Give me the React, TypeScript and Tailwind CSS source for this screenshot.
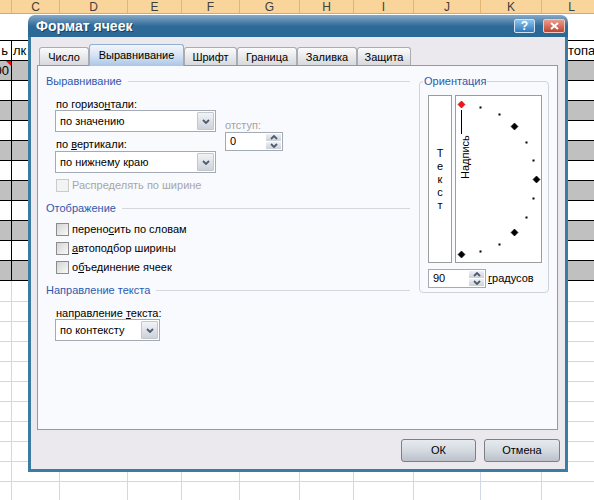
import React from "react";

const COLS = [12, 48, 68, 54, 58, 60, 54, 60, 67, 61, 60];
const LETTERS = ["", "C", "D", "E", "F", "G", "H", "I", "J", "K", "L"];

function Sheet() {
  const bordered = Array.from({ length: 12 }, (_, i) => i);
  const light = Array.from({ length: 11 }, (_, i) => i);
  return (
    <div className="flex flex-col">
      {/* column header */}
      <div className="flex h-[14px] bg-[#f9d59c] border-b border-[#d9a862]">
        {COLS.map((w, i) => (
          <div
            key={i}
            style={{ width: w }}
            className="shrink-0 border-r border-[#e2b576] text-center text-[12px] leading-[14px] text-[#3f3f3f]"
          >
            {LETTERS[i]}
          </div>
        ))}
      </div>
      <div className="h-[27px] bg-white border-b border-black" />
      {bordered.map((r) => (
        <div key={r} className={`flex h-[20px] border-b border-black ${r % 2 === 1 ? "bg-[#c0c0c0]" : "bg-white"}`}>
          {COLS.map((w, i) => (
            <div
              key={i}
              style={{ width: w }}
              className="relative shrink-0 overflow-hidden whitespace-nowrap border-r border-black text-[13px] leading-[19px] text-black"
            >
              {r === 0 && i === 0 && <span className="absolute right-[3px]">ь</span>}
              {r === 0 && i === 1 && <span className="pl-[1px]">лк</span>}
              {r === 0 && i === 10 && <span className="absolute left-[26px]">топа</span>}
              {r === 1 && i === 0 && (
                <>
                  <span className="absolute right-[2px]">00</span>
                  <span className="absolute right-0 top-0 h-0 w-0 border-l-[5px] border-t-[5px] border-l-transparent border-t-[#ff0000]" />
                </>
              )}
            </div>
          ))}
        </div>
      ))}
      {light.map((r) => (
        <div key={r} className={`flex ${r === 0 ? "h-[21px]" : "h-[20px]"} border-b border-[#d0d7e5] bg-white`}>
          {COLS.map((w, i) => (
            <div key={i} style={{ width: w }} className="shrink-0 border-r border-[#d0d7e5]" />
          ))}
        </div>
      ))}
    </div>
  );
}

function Chevron({ up }: { up?: boolean }) {
  return (
    <svg width="8" height="5" viewBox="0 0 8 5">
      <path
        d={up ? "M1 4 L4 1 L7 4" : "M1 1 L4 4 L7 1"}
        fill="none"
        stroke="#4e5b72"
        strokeWidth="1.8"
      />
    </svg>
  );
}

function Select({ width, value, className = "" }: { width: number; value: string; className?: string }) {
  return (
    <div
      style={{ width }}
      className={`flex h-[22px] items-center border border-[#a4aab3] bg-white ${className}`}
    >
      <span className="flex-1 pl-[4px] whitespace-nowrap">{value}</span>
      <div className="mr-[1px] flex h-[18px] w-[17px] items-center justify-center rounded-[1px] border border-[#c3c7ce] bg-gradient-to-b from-[#f1f3f6] to-[#cdd2da]">
        <Chevron />
      </div>
    </div>
  );
}

function Spin({ width, value, className = "" }: { width: number; value: string; className?: string }) {
  return (
    <div style={{ width }} className={`flex h-[19px] items-stretch border border-[#a4aab3] bg-white ${className}`}>
      <span className="flex-1 pl-[4px] leading-[17px]">{value}</span>
      <div className="m-[1px] flex w-[15px] flex-col gap-[1px]">
        <div className="flex flex-1 items-center justify-center bg-gradient-to-b from-[#eef0f3] to-[#ccd1d8]">
          <Chevron up />
        </div>
        <div className="flex flex-1 items-center justify-center bg-gradient-to-b from-[#eef0f3] to-[#ccd1d8]">
          <Chevron />
        </div>
      </div>
    </div>
  );
}

function Check({ children, disabled, className = "" }: { children: React.ReactNode; disabled?: boolean; className?: string }) {
  return (
    <div className={`flex h-[14px] items-center pl-[10px] ${className}`}>
      <span
        className={`h-[13px] w-[13px] shrink-0 border ${
          disabled
            ? "border-[#cbcbcb] bg-[#f3f3f3]"
            : "border-[#8c8c8c] bg-gradient-to-br from-[#d3d3d3] to-[#fafafa]"
        }`}
      />
      <span className={`ml-[3px] whitespace-nowrap ${disabled ? "text-[#a6a6a6]" : "text-black"}`}>{children}</span>
    </div>
  );
}

function GroupHead({ children, className = "" }: { children: React.ReactNode; className?: string }) {
  return (
    <div className={`flex h-[14px] items-center ${className}`}>
      <span className="whitespace-nowrap text-[#2d59ae]">{children}</span>
      <div className="ml-[6px] h-px flex-1 bg-[#d5d8df]" />
    </div>
  );
}

function Label({ children, className = "" }: { children: React.ReactNode; className?: string }) {
  return <div className={`h-[14px] whitespace-nowrap pl-[1px] ${className}`}>{children}</div>;
}

function Dial() {
  const pts = Array.from({ length: 13 }, (_, i) => {
    const a = ((90 - i * 15) * Math.PI) / 180;
    return { x: Math.round(5 + 75 * Math.cos(a)), y: Math.round(83 - 75 * Math.sin(a)), i };
  });
  return (
    <svg width="85" height="166" viewBox="0 0 85 166">
      <line x1="5.5" y1="14" x2="5.5" y2="38" stroke="#000" strokeWidth="1" />
      <text
        transform="translate(12.5,83) rotate(-90)"
        fontFamily="Liberation Sans, Arial, sans-serif"
        fontSize="11"
        fill="#000"
      >
        Надпись
      </text>
      {pts.map((p) =>
        p.i % 3 === 0 ? (
          <polygon
            key={p.i}
            points={`${p.x + 0.5},${p.y - 3} ${p.x + 4},${p.y + 0.5} ${p.x + 0.5},${p.y + 4} ${p.x - 3},${p.y + 0.5}`}
            fill={p.i === 0 ? "#ff1010" : "#000"}
            stroke={p.i === 0 ? "#9a0000" : "#000"}
            strokeWidth="0.6"
          />
        ) : (
          <rect key={p.i} x={p.x - 0.5} y={p.y - 0.5} width="2" height="2" fill="#000" />
        )
      )}
    </svg>
  );
}

function Orientation() {
  return (
    <fieldset className="ml-[9px] h-[219px] w-[130px] rounded-[4px] border border-[#cfd3db] pl-[8px]">
      <legend className="-ml-[5px] px-[1px] leading-[14px] text-[#2d59ae]">Ориентация</legend>
      <div className="mt-[7px] flex gap-[3px]">
        <div className="flex h-[168px] w-[24px] flex-col items-center justify-center border border-[#9c9c9c] bg-white leading-[13px]">
          <span>Т</span>
          <span>е</span>
          <span>к</span>
          <span>с</span>
          <span>т</span>
        </div>
        <div className="h-[168px] w-[87px] border border-[#9c9c9c] bg-white">
          <Dial />
        </div>
      </div>
      <div className="mt-[6px] flex items-center">
        <Spin width={58} value="90" />
        <span className="ml-[2px]">
          <u className="underline">г</u>радусов
        </span>
      </div>
    </fieldset>
  );
}

const TABS: [string, number][] = [
  ["Число", 50],
  ["Выравнивание", 95],
  ["Шрифт", 53],
  ["Граница", 60],
  ["Заливка", 60],
  ["Защита", 54],
];

function Tabs() {
  return (
    <div className="flex h-[28px] items-end pl-[8px]">
      {TABS.map(([name, w], i) =>
        i === 1 ? (
          <div
            key={name}
            style={{ width: w }}
            className="relative z-10 -mb-px flex h-[22px] items-center justify-center rounded-t-[3px] border border-b-0 border-[#8fb0d3] bg-gradient-to-b from-[#f3f6fb] via-[#d6e3f2] to-[#a9c6e8] pb-[1px]"
          >
            {name}
          </div>
        ) : (
          <div
            key={name}
            style={{ width: w }}
            className="flex h-[18px] items-center justify-center rounded-t-[3px] border border-b-0 border-[#a9acb3] bg-gradient-to-b from-[#fbfbfc] to-[#d8d9de] pt-[2px]"
          >
            {name}
          </div>
        )
      )}
    </div>
  );
}

function Panel() {
  return (
    <div className="mx-[6px] flex h-[365px] w-[521px] border border-[#8f9aa6] bg-[#f9fafd] pl-[8px] pt-[8px]">
      <div className="flex w-[364px] flex-col">
        <GroupHead>Выравнивание</GroupHead>
        <div className="mt-[8px] flex pl-[9px]">
          <div className="flex w-[161px] flex-col">
            <Label>
              по горизо<u className="underline">н</u>тали:
            </Label>
            <Select width={161} value="по значению" />
            <Label className="mt-[4px]">
              по <u className="underline">в</u>ертикали:
            </Label>
            <Select width={161} value="по нижнему краю" className="mt-[1px]" />
          </div>
          <div className="ml-[9px] flex flex-col pt-[21px]">
            <span className="h-[14px] text-[#a3a3a3]">отступ:</span>
            <Spin width={58} value="0" className="mt-px" />
          </div>
        </div>
        <Check disabled className="mt-[5px]">
          Распределять по ширине
        </Check>
        <GroupHead className="mt-[9px]">Отображение</GroupHead>
        <Check className="mt-[7px]">
          перено<u className="underline">с</u>ить по словам
        </Check>
        <Check className="mt-[5px]">
          <u className="underline">а</u>втоподбор ширины
        </Check>
        <Check className="mt-[5px]">
          о<u className="underline">б</u>ъединение ячеек
        </Check>
        <GroupHead className="mt-[9px]">Направление текста</GroupHead>
        <div className="mt-[8px] pl-[9px]">
          <Label>
            направление <u className="underline">т</u>екста:
          </Label>
          <Select width={105} value="по контексту" />
        </div>
      </div>
      <Orientation />
    </div>
  );
}

function Button({ children, width }: { children: React.ReactNode; width: number }) {
  return (
    <div
      style={{ width }}
      className="flex h-[23px] items-center justify-center rounded-[3px] border border-[#7b7f86] bg-gradient-to-b from-[#e6ebf1] via-[#d5dae2] to-[#bcc1c9]"
    >
      {children}
    </div>
  );
}

function Dialog() {
  return (
    <div className="absolute left-[28px] top-[15px] flex h-[457px] w-[540px] flex-col">
      <div className="flex h-[22px] items-center rounded-t-[7px] bg-gradient-to-b from-[#86aac8] via-[#2f6a98] to-[#2a6896] pl-[8px] pr-[3px]">
        <span className="flex-1 text-[14px] font-bold text-white [text-shadow:1px_1px_0_#1b3f5e]">Формат ячеек</span>
        <div className="flex h-[14px] w-[21px] items-center justify-center rounded-[2px] border border-[#cfe2f2] bg-gradient-to-b from-[#8cc4ec] to-[#2f78bb] text-[12px] font-bold leading-none text-white">
          ?
        </div>
        <div className="ml-[8px] flex h-[14px] w-[22px] items-center justify-center rounded-[2px] border border-[#f0c8c0] bg-gradient-to-b from-[#e99c8c] to-[#bd4432]">
          <svg width="9" height="8" viewBox="0 0 9 8">
            <path d="M1 1 L8 7 M8 1 L1 7" stroke="#fff" strokeWidth="2" />
          </svg>
        </div>
      </div>
      <div className="flex flex-1 flex-col border-x-[3px] border-b-[3px] border-[#3b7ca3] bg-[#ebe9ed]">
        <Tabs />
        <Panel />
        <div className="mt-[9px] flex justify-end gap-[8px] pr-[5px]">
          <Button width={75}>ОК</Button>
          <Button width={76}>Отмена</Button>
        </div>
      </div>
    </div>
  );
}

export default function App() {
  return (
    <div className="relative h-[500px] w-[594px] overflow-hidden bg-white font-[Liberation_Sans,Arial,sans-serif] text-[11px] text-black">
      <Sheet />
      <Dialog />
    </div>
  );
}
